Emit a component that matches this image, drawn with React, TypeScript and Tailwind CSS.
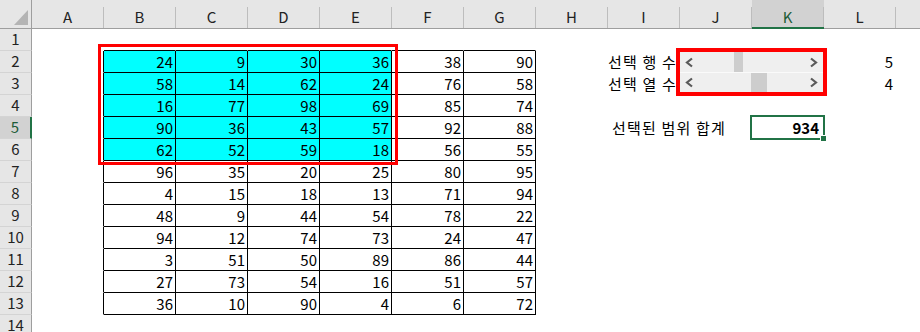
const COLS = ['A', 'B', 'C', 'D', 'E', 'F', 'G', 'H', 'I', 'J', 'K', 'L'];

const DATA: number[][] = [
  [24, 9, 30, 36, 38, 90],
  [58, 14, 62, 24, 76, 58],
  [16, 77, 98, 69, 85, 74],
  [90, 36, 43, 57, 92, 88],
  [62, 52, 59, 18, 56, 55],
  [96, 35, 20, 25, 80, 95],
  [4, 15, 18, 13, 71, 94],
  [48, 9, 44, 54, 78, 22],
  [94, 12, 74, 73, 24, 47],
  [3, 51, 50, 89, 86, 44],
  [27, 73, 54, 16, 51, 57],
  [36, 10, 90, 4, 6, 72],
];

const ROWS = Array.from({ length: 14 }, (_, i) => i + 1);

function inTable(r: number, c: number) {
  return r >= 2 && r <= 13 && c >= 1 && c <= 6;
}

function Chevron({ dir }: { dir: 'left' | 'right' }) {
  return (
    <svg width="9" height="11" viewBox="0 0 9 11">
      <path
        d={dir === 'left' ? 'M7 1.5 L2 5.5 L7 9.5' : 'M2 1.5 L7 5.5 L2 9.5'}
        fill="none"
        stroke="#5a5a5a"
        strokeWidth="2.2"
      />
    </svg>
  );
}

function ScrollBar({ thumbLeft, thumbWidth, top }: { thumbLeft: string; thumbWidth: string; top?: boolean }) {
  return (
    <div className={`flex bg-[#efefef] ${top ? 'h-[20px]' : 'h-[19px] '}`}>
      <div className="w-[19px] flex items-center justify-center">
        <Chevron dir="left" />
      </div>
      <div className={`${thumbLeft} ${thumbWidth} bg-[#cdcdcd]`} />
      <div className="flex-1" />
      <div className="w-[19px] flex items-center justify-center">
        <Chevron dir="right" />
      </div>
    </div>
  );
}

function Cell({ r, c }: { r: number; c: number }) {
  const table = inTable(r, c);
  const right = table || (c === 0 && r >= 2 && r <= 13);
  const bottom = table || (r === 1 && c >= 1 && c <= 6);
  const cyan = r >= 2 && r <= 6 && c >= 1 && c <= 4;

  let content: React.ReactNode = null;
  if (table) content = DATA[r - 2][c - 1];

  const base = `relative h-[22px] w-[72px] shrink-0 border-r border-b ${
    right ? 'border-r-black' : 'border-r-transparent'
  } ${bottom ? 'border-b-black' : 'border-b-transparent'} ${cyan ? 'bg-[#00ffff]' : ''}`;

  if (c === 8 && (r === 2 || r === 3)) {
    return (
      <div className={base}>
        <span className="absolute left-0 top-0 whitespace-nowrap leading-[21px] tracking-[1.2px]">
          {r === 2 ? '선택 행 수' : '선택 열 수'}
        </span>
      </div>
    );
  }
  if (c === 11 && (r === 2 || r === 3)) {
    return (
      <div className={`${base} text-right pr-[2px] leading-[21px]`}>{r === 2 ? 5 : 4}</div>
    );
  }
  if (c === 8 && r === 5) {
    return (
      <div className={base}>
        <span className="absolute left-[4px] top-0 whitespace-nowrap leading-[21px] tracking-[1.2px]">
          선택된 범위 합계
        </span>
      </div>
    );
  }
  if (c === 10 && r === 5) {
    return (
      <div className={`${base} text-right pr-[4px] leading-[21px] font-bold`}>
        934
        {/* active cell outline and fill handle */}
        <div className="absolute left-[-2px] top-[-2px] h-[25px] w-[75px] border-2 border-[#217346]" />
        <div className="absolute left-[68px] top-[18px] h-[7px] w-[7px] border border-white bg-[#217346]" />
      </div>
    );
  }

  return <div className={`${base} text-right pr-[2px] leading-[21px]`}>{content}</div>;
}

export default function App() {
  return (
    <div className="relative h-[332px] w-[920px] overflow-hidden bg-white font-['Noto_Sans_CJK_KR','Noto_Sans',sans-serif] text-[15px] text-black">
      {/* column headers */}
      <div className="flex h-[29px] bg-[#e6e6e6]">
        <div className="relative h-[29px] w-[32px] shrink-0 border-b border-r border-[#9e9e9e]">
          <svg className="absolute left-[14px] top-[10px]" width="14" height="15" viewBox="0 0 14 15">
            <polygon points="14,0 14,15 0,15" fill="#b4b4b4" />
          </svg>
        </div>
        {COLS.map((col) => {
          const sel = col === 'K';
          return (
            <div
              key={col}
              className={`h-[29px] w-[72px] shrink-0 pt-[7px] ${
                sel ? 'border-b-2 border-[#217346] bg-[#d2d2d2]' : 'border-b border-[#9e9e9e]'
              }`}
            >
              <div
                className={`flex h-full items-center justify-center border-r border-r-[#bdbdbd] ${
                  sel ? 'text-[#1d5c38]' : 'text-[#222]'
                }`}
              >
                {col}
              </div>
            </div>
          );
        })}
        <div className="h-[29px] flex-1 border-b border-[#9e9e9e]" />
      </div>

      {/* rows */}
      {ROWS.map((r) => {
        const sel = r === 5;
        return (
          <div key={r} className="flex h-[22px]">
            <div
              className={`flex h-[22px] w-[32px] shrink-0 items-center justify-center border-b border-b-[#d4d4d4] ${
                sel ? 'border-r-2 border-r-[#217346] bg-[#d2d2d2] text-[#1d5c38]' : 'border-r border-r-[#9e9e9e] bg-[#e6e6e6] text-[#222]'
              }`}
            >
              {r}
            </div>
            {COLS.map((_, c) => (
              <Cell key={c} r={r} c={c} />
            ))}
          </div>
        );
      })}

      {/* highlight around B2:E6 */}
      <div className="absolute left-[98px] top-[44px] h-[121px] w-[300px] border-[3px] border-[#ff0000]" />

      {/* scroll bar form controls */}
      <div className="absolute left-[676px] top-[48px] w-[151px] border-4 border-[#ff0000] bg-[#fafafa]">
        <ScrollBar top thumbLeft="ml-[35px]" thumbWidth="w-[9px]" />
        <div className="h-px bg-[#fafafa]" />
        <ScrollBar thumbLeft="ml-[52px]" thumbWidth="w-[16px]" />
      </div>
    </div>
  );
}
